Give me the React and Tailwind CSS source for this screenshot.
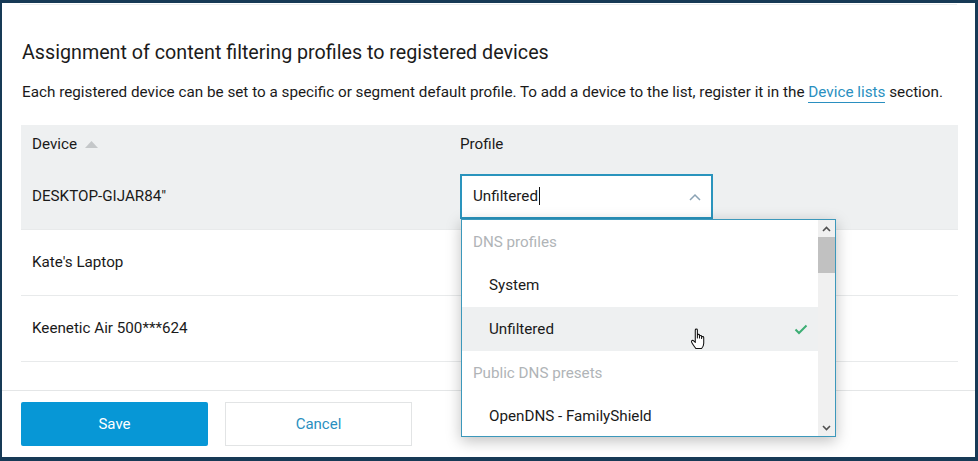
import React from "react";

function Chevron({ up = true, className = "" }) {
  return (
    <svg width="12" height="8" viewBox="0 0 12 8" className={className}>
      <path d={up ? "M1 7 L6 2 L11 7" : "M1 1 L6 6 L11 1"} fill="none" stroke="currentColor" strokeWidth="1.5" />
    </svg>
  );
}

function HandCursor() {
  return (
    <svg width="19" height="24" viewBox="0 0 18 22" className="absolute left-[688px] top-[324px]">
      <path
        d="M5 2.5 C5 1.3 7 1.3 7 2.5 L7 10 L7 7.5 C7 6.3 9 6.3 9 7.5 L9 10 L9 8.5 C9 7.3 11 7.3 11 8.5 L11 10.5 L11 9.5 C11 8.3 13 8.3 13 9.5 L13 15 C13 17.5 12 19 11 20 L5.5 20 C4.5 18.5 2 15.5 1.5 14 C1 12.5 2.5 11.8 3.5 12.8 L5 14.3 Z"
        fill="#fff"
        stroke="#111"
        strokeWidth="1"
        strokeLinejoin="round"
      />
    </svg>
  );
}

export default function App() {
  const rows = [
    { name: 'DESKTOP-GIJAR84"', active: true },
    { name: "Kate's Laptop" },
    { name: "Keenetic Air 500***624" },
  ];
  return (
    <div
      className="w-[978px] h-[461px] bg-[#173a56] pl-[2px] pt-[3px] pr-[3px] pb-[4px] overflow-hidden"
      style={{ fontFamily: "Roboto, 'Liberation Sans', sans-serif" }}
    >
      <div className="relative w-full h-full bg-white flex flex-col text-[#1a1a1a]">
        <div className="mx-[18px] h-px bg-[#eceeef] mt-[1px]" />
        <div className="px-[20px] pt-[35px]">
          <h1 className="text-[19.7px] leading-[26px] text-[#1b1b1b]">
            Assignment of content filtering profiles to registered devices
          </h1>
          <p className="mt-[16px] text-[15.25px] leading-[20px]">
            Each registered device can be set to a specific or segment default profile. To add a device to the list, register it in the{" "}
            <span className="text-[#2a8fc0] border-b border-[#2a8fc0] pb-[1px]">Device lists</span> section.
          </p>
        </div>
        <div className="mx-[19px] mr-[17px] mt-[23px]">
          <div className="flex h-[39px] items-center bg-[#eef0f1] text-[15.2px]">
            <div className="w-[439px] pl-[11px] flex items-center gap-[8px]">
              Device
              <svg width="13" height="7" viewBox="0 0 13 7"><path d="M0 7 L6.5 0 L13 7 Z" fill="#c4c7c9" /></svg>
            </div>
            <div>Profile</div>
          </div>
          {rows.map((r, i) => (
            <div
              key={i}
              className={`flex h-[66px] items-center text-[15.2px] border-b border-[#e8eaeb] ${r.active ? "bg-[#eef0f1]" : "bg-white"}`}
            >
              <div className="w-[439px] pl-[11px]">{r.name}</div>
              {r.active && (
                <div className="w-[253px] h-[45px] border-2 border-[#2a94bd] bg-white flex items-center pl-[11px] pr-[10px] justify-between">
                  <span className="flex items-center">
                    Unfiltered<span className="inline-block w-px h-[18px] bg-[#111] ml-[1px]" />
                  </span>
                  <Chevron className="text-[#8aa2b4]" />
                </div>
              )}
            </div>
          ))}
        </div>
        <div className="mt-[28px] h-px bg-[#e4e6e7]" />
        <div className="flex gap-[17px] px-[19px] pt-[11px]">
          <button className="w-[187px] h-[44px] bg-[#0797d6] text-white text-[15px] rounded-[2px]">Save</button>
          <button className="w-[187px] h-[44px] bg-white border border-[#e2e4e5] text-[#2a8fc0] text-[15px]">Cancel</button>
        </div>

        <div className="absolute left-[459px] top-[216px] w-[375px] h-[218px] bg-white border border-[#3c98bb] shadow-[0_4px_14px_rgba(0,0,0,0.25)] flex text-[15.2px]">
          <div className="flex-1 flex flex-col">
            <div className="h-[44px] flex items-center pl-[11px] text-[#b0b4b7] pt-[1px]">DNS profiles</div>
            <div className="h-[44px] flex items-center pl-[27px] pt-[1px]">System</div>
            <div className="h-[44px] flex items-center pl-[27px] pr-[10px] bg-[#eef0f1] justify-between pt-[1px]">
              Unfiltered
              <svg width="14" height="11" viewBox="0 0 14 11"><path d="M1.5 5.5 L5 9 L12.5 1.5" fill="none" stroke="#3cae74" strokeWidth="2" /></svg>
            </div>
            <div className="h-[44px] flex items-center pl-[11px] text-[#b0b4b7] pt-[1px]">Public DNS presets</div>
            <div className="h-[42px] flex items-center pl-[27px] pt-[2px]">OpenDNS - FamilyShield</div>
          </div>
          <div className="w-[17px] bg-[#f0f0f0] flex flex-col items-center">
            <div className="h-[17px] flex items-center justify-center text-[#505050]">
              <svg width="9" height="6" viewBox="0 0 9 6"><path d="M1 5 L4.5 1.5 L8 5" fill="none" stroke="currentColor" strokeWidth="1.6" /></svg>
            </div>
            <div className="w-full h-[36px] bg-[#c1c1c1]" />
            <div className="flex-1" />
            <div className="h-[17px] flex items-center justify-center text-[#505050]">
              <svg width="9" height="6" viewBox="0 0 9 6"><path d="M1 1 L4.5 4.5 L8 1" fill="none" stroke="currentColor" strokeWidth="1.6" /></svg>
            </div>
          </div>
        </div>
        <HandCursor />
      </div>
    </div>
  );
}
